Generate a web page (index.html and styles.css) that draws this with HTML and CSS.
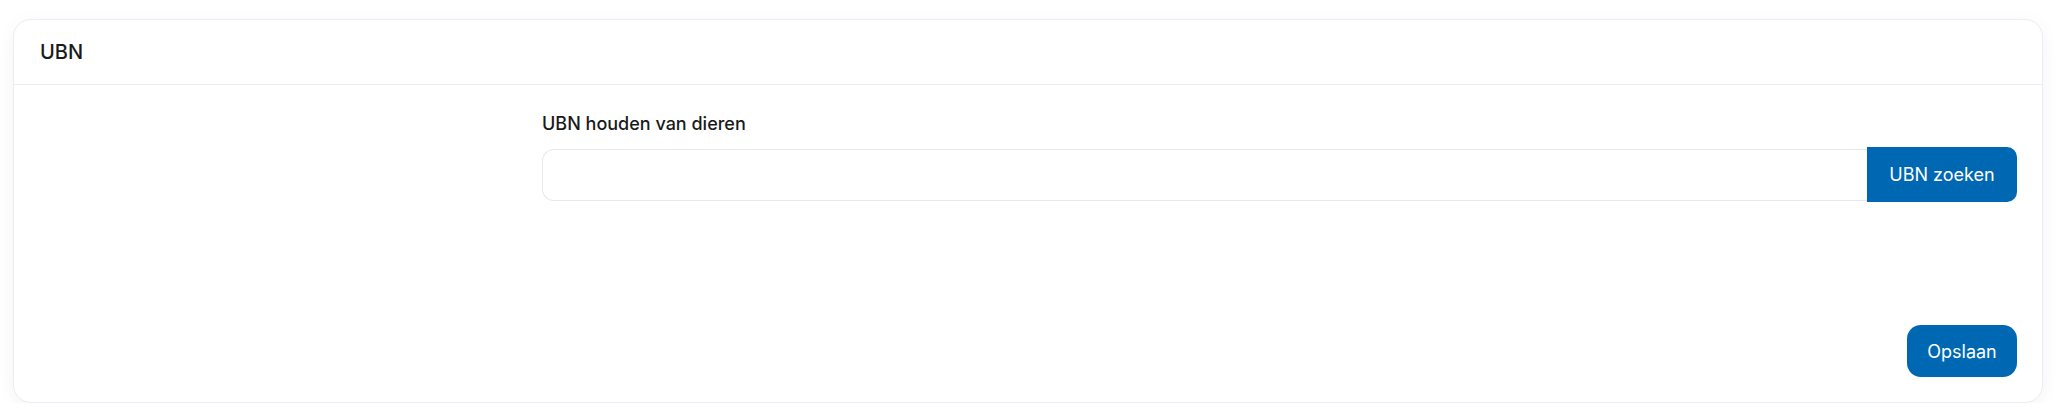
FILE: index.html
```html
<!DOCTYPE html>
<html lang="nl">
<head>
<meta charset="utf-8">
<title>UBN</title>
<link rel="stylesheet" href="styles.css">
</head>
<body>
<div class="card">
  <div class="card-header">
    <h2 class="card-title">UBN</h2>
  </div>
  <div class="card-body">
    <div class="form-grid">
      <div class="form-aside"></div>
      <div class="form-main">
        <label class="field-label" for="ubn">UBN houden van dieren</label>
        <div class="input-group">
          <input id="ubn" class="text-input" type="text">
          <button class="btn btn-append" type="button">UBN zoeken</button>
        </div>
      </div>
    </div>
    <div class="card-actions">
      <button class="btn btn-save" type="button">Opslaan</button>
    </div>
  </div>
</div>
</body>
</html>
```

FILE: styles.css
```css
* { box-sizing: border-box; }

html, body {
  margin: 0;
  background: #ffffff;
}

body {
  padding: 19px 13px 0 13px;
  font-family: Inter, "Noto Sans", sans-serif;
  color: #1a1a1a;
}

.card {
  width: 2030px;
  background: #ffffff;
  border: 1px solid #eaedf5;
  border-radius: 18px;
  box-shadow: 0 4px 18px rgba(30, 40, 80, 0.05);
}

.card-header {
  height: 65px;
  display: flex;
  align-items: center;
  padding: 0 26px;
  border-bottom: 1px solid #eaedf5;
}

.card-title {
  margin: 0;
  font-size: 20px;
  font-weight: 500;
  color: #1a1a1a;
}

.card-body {
  padding: 25px 25px 25px 26px;
}

.form-grid {
  display: grid;
  grid-template-columns: 502px 1fr;
}

.form-main {
  display: flex;
  flex-direction: column;
}

.field-label {
  font-size: 18px;
  line-height: 27px;
  font-weight: 500;
  color: #1a1a1a;
  margin-bottom: 10px;
}

.input-group {
  display: flex;
  align-items: center;
}

.text-input {
  flex: 1;
  height: 52px;
  border: 1px solid #e6e8f0;
  border-right: none;
  border-radius: 12px 0 0 12px;
  padding: 0 16px;
  font-family: inherit;
  font-size: 18px;
  outline: none;
}

.btn {
  font-family: inherit;
  font-size: 18px;
  font-weight: 400;
  color: #ffffff;
  background: #0068b3;
  border: none;
  cursor: pointer;
}

.btn-append {
  width: 150px;
  height: 55px;
  border-radius: 0 10px 10px 0;
}

.card-actions {
  display: flex;
  justify-content: flex-end;
  margin-top: 123px;
}

.btn-save {
  width: 110px;
  height: 52px;
  border-radius: 14px;
}
```
